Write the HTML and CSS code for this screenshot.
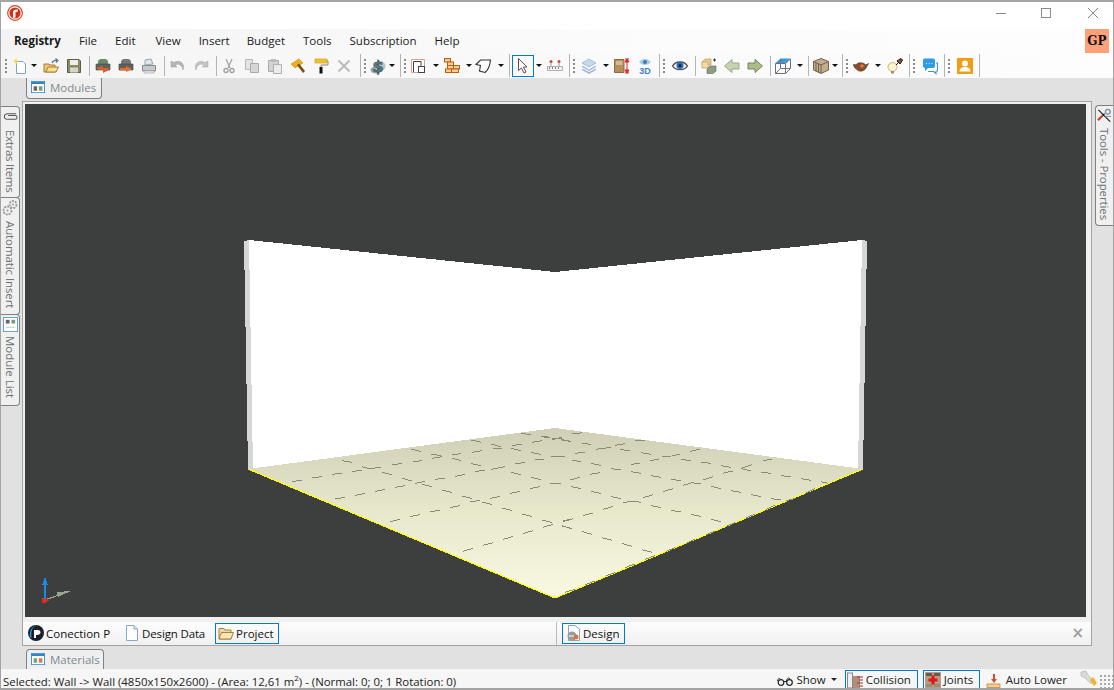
FILE: index.html
```html
<!DOCTYPE html>
<html lang="en">
<head>
<meta charset="utf-8">
<title>Design</title>
<link rel="stylesheet" href="styles.css">
</head>
<body>
<div class="window">
  <header class="title">
    <svg class="logo" viewBox="0 0 16 16"><circle cx="8" cy="8" r="7.300" fill="#fff" stroke="#d8432a" stroke-width="1.200"/><circle cx="8" cy="8" r="5.600" fill="#d62f14"/><path d="M6 13V7.500C6 5 8 4 11 4.500L10.500 7H8.500V12.500Z" fill="#fff"/></svg>
    <div class="controls">
      <svg class="ctl ctl-min" viewBox="0 0 12 12"><path d="M1 6.500H11" stroke="#8a8a8a"/></svg>
      <svg class="ctl ctl-max" viewBox="0 0 12 12"><rect x="1.500" y="1.500" width="9" height="9" fill="none" stroke="#8a8a8a"/></svg>
      <svg class="ctl ctl-close" viewBox="0 0 12 12"><path d="M1 1L11 11M11 1L1 11" stroke="#8a8a8a"/></svg>
    </div>
  </header>
  <nav class="menu">
    <span class="mi mi-bold">Registry</span><span class="mi">File</span><span class="mi mi-wide">Edit</span><span class="mi">View</span><span class="mi">Insert</span><span class="mi mi-tight">Budget</span><span class="mi">Tools</span><span class="mi">Subscription</span><span class="mi">Help</span>
    <span class="gp">GP</span>
  </nav>
  <div class="toolbar">
    <i class="grip"></i>
    <span class="b b21 ml1"><svg viewBox="0 0 16 16"><path d="M4.500 3.500H11L13.500 6V15.500H4.500Z" fill="#fff" stroke="#7da2ce"/><path d="M4 0L5 2.500L7.500 3L5 4L4 6.500L3 4L.5 3L3 2.500Z" fill="#f7d948"/></svg></span><span class="c c10"><u></u></span>
    <span class="b"><svg viewBox="0 0 16 16"><path d="M1 14V6H6L7 7H12V14Z" fill="#e9c77a" stroke="#a97c2c"/><path d="M3 14L5 9H15.500L13 14Z" fill="#f8dd93" stroke="#a97c2c"/><path d="M9 5C10 2.500 12 2 14 2.500M12.500 .5L15 2.500L13 4.500" fill="none" stroke="#5b6f86" stroke-width="1.200"/></svg></span>
    <span class="b"><svg viewBox="0 0 16 16"><path d="M1.500 1.500H13L14.500 3V14.500H1.500Z" fill="#8c8a66" stroke="#5f5d46"/><rect x="4" y="2" width="8" height="5" fill="#eee"/><rect x="4" y="9.500" width="8" height="5" fill="#d8d6c8"/></svg></span>
    <i class="sep"></i>
    <span class="b"><svg viewBox="0 0 16 16"><path d="M3 3L5 1H11L13 3V6H3Z" fill="#6a8a6a"/><path d="M1 6H15V12H1Z" fill="#5d6360" stroke="#454a48" stroke-width=".6"/><path d="M2 10H8V8L14 9.500V11L8 12.500V15L2 12Z" fill="#d4622a" transform="matrix(-1 0 0 1 16 0)"/></svg></span>
    <span class="b"><svg viewBox="0 0 16 16"><path d="M3 3L5 1H11L13 3V6H3Z" fill="#777"/><path d="M1 6H15V12H1Z" fill="#5d5f60" stroke="#454545" stroke-width=".6"/><path d="M2 10H8V8L14 11L8 14V12.500H2Z" fill="#e2702f"/></svg></span>
    <span class="b"><svg viewBox="0 0 16 16"><path d="M4 7V2L10 1L12 6Z" fill="#dfe7ee" stroke="#9aa6b2"/><path d="M1.500 7.500H14.500V13H1.500Z" fill="#c6c8c9" stroke="#8a8d8f"/><path d="M3 13H13V15H3Z" fill="#eee" stroke="#9a9a9a" stroke-width=".6"/></svg></span>
    <i class="sep"></i>
    <span class="b"><svg viewBox="0 0 16 16"><path d="M1 3V9H7L5 7C8 5 12 6.500 13 12C15.500 6 10 1 4 4.500Z" fill="#b5b5b5" stroke="#9c9c9c" stroke-width=".5"/></svg></span>
    <span class="b"><svg viewBox="0 0 16 16"><path d="M15 3V9H9L11 7C8 5 4 6.500 3 12C.5 6 6 1 12 4.500Z" fill="#c4c4c4" stroke="#a5a5a5" stroke-width=".5"/></svg></span>
    <i class="sep sep5"></i>
    <span class="b"><svg viewBox="0 0 16 16"><path d="M5 1L9 10M11 1L7 10" stroke="#a9a9a9" stroke-width="1.400"/><circle cx="5" cy="12.500" r="2" fill="none" stroke="#a0a0a0" stroke-width="1.300"/><circle cx="11" cy="12.500" r="2" fill="none" stroke="#a0a0a0" stroke-width="1.300"/></svg></span>
    <span class="b"><svg viewBox="0 0 16 16"><path d="M1.500 1.500H8.500V11.500H1.500Z" fill="#e4e4e4" stroke="#b8b8b8"/><path d="M6.500 5.500H14.500V14.500H6.500Z" fill="#d6d6d6" stroke="#aaa"/></svg></span>
    <span class="b"><svg viewBox="0 0 16 16"><path d="M1.500 2.500H11.500V13.500H1.500Z" fill="#d2d2d2" stroke="#aaa"/><rect x="4" y="1" width="5" height="3" fill="#bbb"/><path d="M6.500 6.500H14.500V15.500H6.500Z" fill="#ececec" stroke="#b0b0b0"/></svg></span>
    <span class="b"><svg viewBox="0 0 16 16"><path d="M1 6L9 1L13 5L5 10Z" fill="#f0b01c" stroke="#c88c10" stroke-width=".6"/><path d="M7 7L9 5.500L15 13L13 15Z" fill="#7f4c17"/></svg></span>
    <span class="b"><svg viewBox="0 0 16 16"><rect x="2" y="1" width="12" height="4" fill="#f2c22e" stroke="#c99a18" stroke-width=".6"/><path d="M14 3H15V7H8V9" fill="none" stroke="#888"/><rect x="6.500" y="9" width="3" height="6.500" fill="#111"/></svg></span>
    <span class="b"><svg viewBox="0 0 16 16"><path d="M2.500 2.500L13.500 13.500M13.500 2.500L2.500 13.500" stroke="#bcbcbc" stroke-width="2"/></svg></span>
    <i class="end"></i>
    <i class="grip"></i>
    <span class="b b21"><svg viewBox="0 0 16 16"><ellipse cx="6" cy="12" rx="5.500" ry="3.500" fill="#8fa5a8"/><ellipse cx="10" cy="8" rx="5.500" ry="5" fill="#b4c6c5"/><text x="8" y="13.500" class="dollar">$</text></svg></span><span class="c c8"><u></u></span>
    <i class="end"></i>
    <i class="grip"></i>
    <span class="b"><svg viewBox="0 0 16 16"><path d="M1.500 1.500H14.500V14.500H1.500Z" fill="#fff" stroke="#e0a088"/><path d="M3.500 14V3.500H11V8" fill="none" stroke="#444"/><rect x="8.500" y="8.500" width="6" height="6" fill="#fff" stroke="#444"/></svg></span><span class="c c11 p3"><u></u></span>
    <span class="b"><svg viewBox="0 0 16 16"><g fill="#f3ce9a" stroke="#bd5f0a"><rect x=".5" y=".5" width="6" height="3.500"/><rect x="3.500" y="4" width="6" height="3.500"/><rect x="9.500" y="7.500" width="6" height="3.500"/><rect x="3.500" y="7.500" width="6" height="3.500"/><rect x="1.500" y="11" width="6" height="3.500"/><rect x="7.500" y="11" width="7" height="3.500"/></g></svg></span><span class="c c8 p2"><u></u></span>
    <span class="b"><svg viewBox="0 0 16 16"><path d="M1 6.500L5.500 2H15.500C15 7 13 12 10 14.500L4.500 13L5.500 7.500Z" fill="#fff" stroke="#333" stroke-width="1.100"/></svg></span><span class="c c10 p3"><u></u></span>
    <i class="end"></i>
    <span class="b sel ml2"><svg viewBox="0 0 16 16"><path d="M3.500 .5L12 9H8.500L11 14L9 15L6.500 10L3.500 12.500Z" fill="#fff" stroke="#6d4a44"/></svg></span><span class="c c9 p2"><u></u></span>
    <span class="b b21 ml1"><svg viewBox="0 0 16 16"><circle cx="4" cy="3.500" r="1.500" fill="#c8493a"/><circle cx="12" cy="3.500" r="1.500" fill="#c8493a"/><path d="M4 5V8M12 5V8" stroke="#999"/><path d="M.5 8.500H15.500V12.500H.5Z" fill="#f1f1f1" stroke="#b0b0b0"/><path d="M2.500 9V11M5.500 9V11M8.500 9V11M11.500 9V11" stroke="#888"/></svg></span>
    <i class="end"></i>
    <i class="grip"></i>
    <span class="b ml2"><svg viewBox="0 0 16 16"><path d="M8 1L15 5L8 9L1 5Z" fill="#c3d9ee" stroke="#8fa1b4" stroke-width=".6"/><path d="M1.500 7.500L8 11.500L14.500 7.500L15 9L8 13L1 9Z" fill="#9dbde0"/><path d="M1.500 10.500L8 14L14.500 10.500L15 12L8 16L1 12Z" fill="#a8b6de"/></svg></span><span class="c c10 p2"><u></u></span>
    <span class="b"><svg viewBox="0 0 16 16"><path d="M.5 1.500H10V14.500H.5Z" fill="#b58d5e" stroke="#8c6a44"/><rect x="2" y="3" width="6.500" height="4" fill="#d4bb95"/><path d="M13 1V15M11 1H15M11 15H15M13 1L11 4H15ZM13 15L11 12H15Z" stroke="#e02424" fill="#e02424"/></svg></span>
    <span class="b b21"><svg viewBox="0 0 16 16"><path d="M2 4C5 0 11 0 14 4C11 8 5 8 2 4Z" fill="#a8cde8"/><circle cx="8" cy="4" r="2" fill="#3d7bb0"/><text x="8" y="15.500" class="t3d">3D</text></svg></span>
    <i class="end"></i>
    <i class="grip"></i>
    <span class="b ml3"><svg viewBox="0 0 16 16"><path d="M.5 8C4 2.500 12 2.500 15.500 8C12 13 4 13 .5 8Z" fill="#eef2f6" stroke="#3b4044" stroke-width="1.200"/><circle cx="8" cy="7.500" r="3.500" fill="#2f69b3"/><circle cx="8" cy="7.500" r="1.500" fill="#10233d"/></svg></span>
    <i class="sep"></i>
    <span class="b"><svg viewBox="0 0 16 16"><path d="M1 4L4 1H10V7H1Z" fill="#eccb92" stroke="#b58d4e" stroke-width=".6"/><path d="M1 4H7V10H1Z" fill="#f5dcae" stroke="#b58d4e" stroke-width=".6"/><path d="M6 11L9 8H15V13L12 15.500H6Z" fill="#8d9d84" stroke="#5c6a55" stroke-width=".6"/><path d="M12 2H15M13.500 .5V3.500" stroke="#333"/></svg></span>
    <span class="b"><svg viewBox="0 0 16 16"><path d="M.5 8L8 1.500V5H15V11H8V14.500Z" fill="#c5d2ae" stroke="#9aa88a"/></svg></span>
    <span class="b"><svg viewBox="0 0 16 16"><path d="M15.500 8L8 1.500V5H1V11H8V14.500Z" fill="#abbd8b" stroke="#74845c"/></svg></span>
    <i class="sep sep5"></i>
    <span class="b"><svg viewBox="0 0 16 16"><path d="M5.500 .5H15.500L10.500 5H.5Z" fill="#3a9ad9"/><path d="M.5 5.500H10.500V15.500H.5ZM10.500 5.500L15.500 1V10.500L10.500 15.500M.5 15.500L5.500 10.500H15.500M5.500 1V10.500" fill="none" stroke="#6e7078"/></svg></span><span class="c c10 p2"><u></u></span>
    <i class="sep sep5"></i>
    <span class="b b21"><svg viewBox="0 0 16 16"><path d="M8 .5L15.500 3.500V12L8 15.500L.5 12V3.500Z" fill="#c3ad8a" stroke="#6f6250"/><path d="M.5 3.500L8 7L15.500 3.500M8 7V15.500M3 5V13M5.500 6V14.500" fill="none" stroke="#6f6250"/></svg></span><span class="c c7 p1"><u></u></span>
    <i class="end"></i>
    <i class="grip"></i>
    <span class="b ml1"><svg viewBox="0 0 16 16"><path d="M3 7C4 4 11 4 12.500 7L15.500 5.500L13 10C11 14 5 14 3.500 11C1.500 10.500 .5 8 .5 6.500C1.500 6.500 2.500 6.500 3 7Z" fill="#8a4d2d" stroke="#4b3325" stroke-width=".6"/><circle cx="9" cy="8" r="1.800" fill="#dd7a34"/></svg></span><span class="c c11 p2"><u></u></span>
    <span class="b b21"><svg viewBox="0 0 16 16"><circle cx="5.500" cy="9" r="4.500" fill="#fff4cf" stroke="#cbb36b"/><rect x="4" y="13" width="3" height="2.500" fill="#99917c"/><path d="M9 7L11 5M10 3L14 .5L15.500 2L13 6Z" stroke="#111" fill="#9f541d"/></svg></span>
    <i class="end"></i>
    <i class="grip"></i>
    <span class="b b21 ml3"><svg viewBox="0 0 16 16"><path d="M1 2.500C1 1 2 .5 3 .5H11C12.500 .5 13 1.500 13 2.500V8C13 9 12 10 11 10H6L3 13V10C2 10 1 9 1 8Z" fill="#2f9be4"/><path d="M14 5H15.500V12C15.500 13 15 13.500 14 13.500V15.500L11.500 13.500H6" fill="none" stroke="#4a90c0" stroke-width="1.100"/><path d="M4 5.500H4.800M6.800 5.500H7.600M9.600 5.500H10.400" stroke="#fff" stroke-width="1.200"/></svg></span>
    <i class="end"></i>
    <i class="grip"></i>
    <span class="b b21 ml3"><svg viewBox="0 0 16 16"><rect width="16" height="16" fill="#f19c12"/><circle cx="8" cy="5.500" r="3" fill="#fff"/><path d="M2.500 13.500C2.500 10 5.500 9 8 9C10.500 9 13.500 10 13.500 13.500Z" fill="#fff"/></svg></span>
    <i class="end"></i>
  </div>
  <div class="band band-top">
    <div class="hang-tab"><svg class="tab-ico" viewBox="0 0 16 16" preserveAspectRatio="none"><rect x=".5" y=".5" width="15" height="15" fill="#fff" stroke="#2e86c8"/><rect x="1" y="1" width="14" height="3" fill="#2e86c8"/><rect x="3" y="7" width="4" height="6" fill="#666"/><rect x="9" y="7" width="4" height="6" fill="#7a9a7a"/></svg><span>Modules</span></div>
  </div>
  <main class="main">
    <aside class="side-left">
      <div class="vtab vtab-a"><svg viewBox="0 0 16 16"><path d="M14 5H5C3 5 1.500 6 1.500 8S3 11 5 11H13C14.500 11 15 10 15 9S14.500 7 13 7H5.500" fill="none" stroke="#555" stroke-width="1.100"/></svg><span>Extras Items</span></div>
      <div class="vtab vtab-b"><svg viewBox="0 0 16 16"><g fill="none" stroke="#9a9a9a" stroke-width="1.800" stroke-dasharray="2 1"><circle cx="5.500" cy="10.500" r="4"/><circle cx="11" cy="4.500" r="3.500"/></g><circle cx="5.500" cy="10.500" r="1" fill="#9a9a9a"/><circle cx="11" cy="4.500" r="1" fill="#9a9a9a"/></svg><span>Automatic Insert</span></div>
      <div class="vtab vtab-c"><svg viewBox="0 0 16 16"><rect x=".5" y=".5" width="15" height="15" fill="#fff" stroke="#5aa0d4"/><rect x="3" y="3" width="4" height="4" fill="#666"/><rect x="9" y="3" width="4" height="4" fill="#7a9a7a"/><path d="M3 11H13" stroke="#c8c8c8"/></svg><span>Module List</span></div>
    </aside>
    <section class="frame">
      <svg class="scene" viewBox="25 104 1061 513">
        <defs><linearGradient id="floorfill" x1="0" y1="0" x2="0" y2="1"><stop offset="0" stop-color="#cfcfb7"/><stop offset=".5" stop-color="#e8e8cd"/><stop offset="1" stop-color="#f9f9e3"/></linearGradient></defs>
        <path d="M244 241L249 240L253 470L248 469Z" fill="#d6d6d6"/>
        <path d="M862 240L867 241L863 469L858 470Z" fill="#d6d6d6"/>
        <path d="M249 240L555 272L862 240L858 470L555 428L253 470Z" fill="#fff"/>
        <path d="M248 469L555 428L863 469L555 598Z" fill="url(#floorfill)"/>
        <path d="M248 469L555 598L863 469" fill="none" stroke="#ff0" stroke-width="1.200"/>
        <g transform="translate(230 420) scale(.33333)" class="dashes">
          <path d="M186 185L215 180M247 174L276 170M306 163L336 160M367 155L396 150M396 140L420 147M418 146L453 142M336 122L366 127M457 157L486 164M487 135L516 130M549 125L576 122M543 87L573 95M604 102L632 107M606 115L636 110M665 105L692 101M665 114L693 122M727 97L756 92M724 60L753 67M783 72L812 80M789 85L816 84M845 77L875 72M843 85L872 92M907 67L936 62M873 40L902 44M934 48L960 52M967 57L995 53M994 60L1018 62M903 97L932 103M915 120L942 117M963 110L1005 108M723 131L753 137M784 148L825 140M855 132L884 127M843 157L872 164M904 172L933 179M735 155L765 150M676 169L705 163M615 178L645 175M556 190L585 184M575 192L605 200M516 175L546 183M495 202L525 197M436 214L465 208M376 226L405 220M315 237L345 232M636 210L666 218M697 228L726 236M720 246L750 241M756 246L786 254M781 235L810 229M840 220L870 214M900 206L930 200M962 190L992 190M816 264L846 272M877 282L906 290M937 300L966 308M940 322L968 313M997 317L1020 325M1000 303L1020 298M660 263L690 257M600 276L630 270M540 290L570 284M480 305L510 298M699 394L729 385M759 376L789 368M820 358L849 349M880 340L909 332"/>
        </g>
        <g transform="translate(540 420) scale(.33333)" class="dashes">
          <path d="M2 50L30 53M37 58L65 55M65 58L92 65M97 42L127 38M127 70L154 73M167 88L212 82M225 76L255 71M241 88L270 93M285 62L315 61M303 98L333 103M330 122L358 117M365 109L393 111M395 107L420 103M423 118L453 122M450 95L480 87M483 127L513 130M543 137L573 142M603 145L637 134M605 146L632 153M549 160L578 153M663 157L693 160M670 122L695 118M723 167L753 170M783 176L813 181M843 185L865 190M693 236L723 240M633 224L663 230M573 212L603 217M513 199L543 206M489 180L518 170M430 196L456 188L483 192M393 178L423 182M333 167L363 172M369 215L398 206M310 233L339 224M249 249L276 243L303 247M213 230L243 236M153 214L183 220M93 200L123 206M90 180L120 172M30 190L62 190M150 163L180 158M153 130L183 136M96 121L123 125M213 146L243 150M273 133L300 130M273 155L302 160M32 110L75 108M106 100L135 96M0 118L12 118M189 268L218 260M129 287L158 279M69 305L99 296M6 300L36 308M10 322L38 313M67 318L96 326M127 335L156 343M186 353L216 361M247 371L276 379M306 389L336 397M333 257L363 263M393 271L423 276M453 283L483 289M513 298L543 305M75 517L105 508M135 495L165 483M197 468L225 458M255 443L285 432M316 418L345 407M378 394L405 383M438 370L465 358M497 345L525 333M558 320L585 307M617 294L645 282M678 268L705 256M738 243L765 235M795 220L825 206"/>
        </g>
        <path d="M45 600L70 591" stroke="#9aa58f" stroke-width="1.200"/>
        <path d="M57 592L70 591L58 597Z" fill="#9aa58f"/>
        <path d="M45 600V584" stroke="#1e88e5" stroke-width="1.500"/>
        <path d="M42 585L45 577L48 585Z" fill="#1e88e5"/>
        <path d="M42 598L50 600L45 603H42Z" fill="#e02b1d"/>
      </svg>
      <div class="tabbar">
        <div class="pane pane-left">
          <div class="pt"><svg viewBox="0 0 16 16"><circle cx="8" cy="8" r="8" fill="#1b1f2c"/><path d="M2 12C1 6 4 1 9 0C3 2 3 8 3.500 13Z" fill="#2e9be6"/><path d="M6 13V5H10C12 5 12.500 6.500 12.500 7.500C12.500 9 11 10 9 10H8V13Z" fill="#fff"/></svg><span>Conection P</span></div>
          <div class="pt pt-data"><svg viewBox="0 0 16 16"><path d="M2.500 .5H10L13.500 4V15.500H2.500Z" fill="#fff" stroke="#86a7cf"/><path d="M10 .5V4H13.500" fill="#dbe7f4" stroke="#86a7cf"/></svg><span>Design Data</span></div>
          <div class="pt pt-on pt-proj"><svg viewBox="0 0 16 16"><path d="M1 14V3.500H6L7 5H13V14Z" fill="#efd8a8" stroke="#a7803a"/><path d="M1 14L3.500 7.500H15.500L13 14Z" fill="#f8e5bc" stroke="#a7803a"/></svg><span>Project</span></div>
        </div>
        <div class="pane pane-right">
          <div class="pt pt-on"><svg viewBox="0 0 16 16"><path d="M3.500 .5H10L14.500 4V15.500H3.500Z" fill="#fff" stroke="#86a7cf"/><circle cx="7" cy="11" r="4.500" fill="#9a9a9a"/><circle cx="11" cy="12" r="2.500" fill="#d8743a"/><path d="M4 11H9" stroke="#fff"/></svg><span>Design</span></div>
          <span class="pane-x">×</span>
        </div>
      </div>
    </section>
    <aside class="side-right">
      <div class="vtab-r"><svg viewBox="0 0 16 16"><path d="M1.500 2L14 14.500" stroke="#222" stroke-width="1.300"/><path d="M1 13L6 8" stroke="#c9421d" stroke-width="2.400"/><path d="M6 8L8 6" stroke="#111" stroke-width="1.500"/><circle cx="11.500" cy="4" r="2.500" fill="none" stroke="#7d93a8" stroke-width="1.500"/><path d="M9 9L15 9" stroke="#8d9dac" stroke-width="1.400"/></svg><span>Tools - Properties</span></div>
    </aside>
  </main>
  <div class="band band-bottom">
    <div class="up-tab"><svg class="tab-ico" viewBox="0 0 16 16" preserveAspectRatio="none"><rect x=".5" y=".5" width="15" height="15" fill="#fff" stroke="#2e86c8"/><rect x="1" y="1" width="14" height="3" fill="#2e86c8"/><rect x="3" y="7" width="4" height="6" fill="#7a9a8a"/><rect x="9" y="7" width="4" height="6" fill="#d67a5a"/></svg><span>Materials</span></div>
  </div>
  <footer class="status">
    <span class="status-text">Selected: Wall -&gt; Wall (4850x150x2600) - (Area: 12,61 m<sup>2</sup>) - (Normal: 0; 0; 1 Rotation: 0)</span>
    <div class="status-right">
      <span class="si si-show"><svg viewBox="0 0 16 16"><path d="M.5 9C1 6 3 6 3.500 7.500M9.500 9C10 6 12 5 13 7" fill="none" stroke="#222"/><circle cx="4" cy="10.500" r="2.800" fill="none" stroke="#222" stroke-width="1.200"/><circle cx="12.500" cy="10.500" r="2.800" fill="none" stroke="#222" stroke-width="1.200"/><path d="M6.500 9.500L10 9.500" stroke="#222"/></svg>Show<u class="scaret"></u></span>
      <span class="si si-on si-coll"><svg viewBox="0 0 16 16"><rect x=".5" y="1" width="5" height="15" fill="#eee" stroke="#888"/><rect x="6" y="4" width="7" height="12" fill="#b58d7a"/><path d="M10 5H16M12 8H16M10 11H16M12 14H16" stroke="#8f3a2a"/></svg>Collision</span>
      <span class="si si-on si-joint"><svg viewBox="0 0 16 16"><rect width="16" height="16" fill="#b89c86"/><rect x="1" y="1" width="6" height="3" fill="#6c5a49"/><rect x="9" y="1" width="6" height="3" fill="#6c5a49"/><rect x="1" y="12" width="6" height="3" fill="#8e9478"/><rect x="9" y="12" width="6" height="3" fill="#8e9478"/><path d="M8 3.500V12.500M3.500 8H12.500" stroke="#e01616" stroke-width="3"/></svg>Joints</span>
      <span class="si si-auto"><svg viewBox="0 0 16 16"><path d="M7 2H9V7H11L8 11L5 7H7Z" fill="#d9482a"/><rect x="1" y="12" width="13" height="3.500" fill="#f2cf8e" stroke="#b17a2a" stroke-width=".7"/></svg>Auto Lower</span>
      <svg class="wrench" viewBox="0 0 18 18"><path d="M1 2L6 1L8 5L14 11L11 14L5 8L1 6Z" fill="#d8d8d8" stroke="#a8a8a8" stroke-width=".5"/><path d="M10 10L13 7L17 13L14 16Z" fill="#f0b428"/></svg>
      <i class="size-grip"></i>
    </div>
  </footer>
</div>
</body>
</html>
```
FILE: styles.css
```css
* { box-sizing: border-box; }
html, body { margin: 0; padding: 0; }
body { background: #e1e1e1; font-family: "Open Sans", "Liberation Sans", sans-serif; font-size: 11.5px; color: #1a1a1a; }
i, u { display: block; text-decoration: none; font-style: normal; }
svg { display: block; flex: none; width: 16px; height: 16px; overflow: visible; }

.window { width: 1114px; height: 690px; display: flex; flex-direction: column; overflow: hidden; background: #e1e1e1; border-style: solid; border-color: #a3a3a3; border-width: 2px 1px; }

.title { height: 27px; flex: none; background: #fff; display: flex; align-items: center; padding: 0 0 6px 6px; }
.logo { width: 16px; height: 16px; }
.controls { margin-left: auto; display: flex; }
.ctl { width: 12px; height: 12px; }
.ctl-min { margin-right: 33px; }
.ctl-max { margin-right: 35px; }
.ctl-close { margin-right: 14px; }

.menu { height: 24px; flex: none; display: flex; align-items: center; padding-left: 4px; background: linear-gradient(90deg, #f3f3f3, #fcfcfc 60%, #fdfdfd); font-size: 11.5px; position: relative; }
.mi { padding: 0 9px; line-height: 24px; }
.mi-bold { font-weight: 700; }
.mi-wide { padding-right: 11px; }
.mi-tight { padding-left: 8px; }
.gp { margin-left: auto; margin-right: 4px; width: 24px; height: 24px; background: #ffa07a; display: flex; align-items: center; justify-content: center; font-family: "DejaVu Serif", serif; font-weight: 700; font-size: 12px; color: #111; }

.toolbar { height: 25px; flex: none; display: flex; align-items: center; padding-left: 1px; background: linear-gradient(90deg, #f5f5f5, #fafafa 60%, #fdfdfd); }
.b { width: 23px; height: 22px; flex: none; padding: 3px 4px 3px 3px; }
.b21 { width: 21px; padding-right: 2px; }
.ml1 { margin-left: 1px; }
.ml2 { margin-left: 2px; }
.ml3 { margin-left: 3px; }
.sel { width: 22px; padding: 2px; border: 1px solid #0078d7; }
.c { flex: none; height: 22px; display: flex; align-items: center; padding-left: 1px; }
.c u { border-left: 3px solid transparent; border-right: 3px solid transparent; border-top: 3px solid #111; }
.c7 { width: 7px; } .c8 { width: 8px; } .c9 { width: 9px; } .c10 { width: 10px; } .c11 { width: 11px; }
.p1 { padding-left: 1px; } .p2 { padding-left: 2px; } .p3 { padding-left: 3px; }
.grip { width: 6px; height: 16px; flex: none; background: radial-gradient(circle at 1px 1px, #8a8a8a 1px, transparent 1.1px) 3px 1px / 2px 4px repeat-y; }
.sep { width: 6px; height: 20px; flex: none; background: linear-gradient(#b4b4b4, #b4b4b4) 3px 0 / 1px 100% no-repeat; }
.sep5 { width: 5px; }
.end { width: 5px; height: 23px; flex: none; background: linear-gradient(#b4b4b4, #b4b4b4) 4px 0 / 1px 100% no-repeat; }
.dollar { font: 700 16px "DejaVu Sans", sans-serif; fill: #5f7f88; stroke: #2f4a50; stroke-width: .6px; text-anchor: middle; }
.t3d { font: 700 9px "Liberation Sans", sans-serif; fill: #3f7fc0; text-anchor: middle; }

.band { height: 23px; flex: none; display: flex; }
.hang-tab, .up-tab { display: flex; align-items: center; gap: 5px; color: #7f8a8e; background: #efefef; border: 1px solid #808080; }
.tab-ico { width: 14px; height: 12px; }
.hang-tab { margin-left: 25px; width: 76px; height: 21px; padding: 0 0 2px 4px; border-top: 0; border-radius: 0 0 4px 4px; }
.band-bottom { padding-top: 3px; }
.up-tab { margin-left: 25px; width: 78px; height: 20px; padding: 0 0 1px 4px; border-bottom: 0; border-radius: 4px 4px 0 0; }

.main { height: 545px; flex: none; display: flex; }
.side-left { width: 21px; flex: none; padding-top: 5px; }
.vtab, .vtab-r { display: flex; flex-direction: column; align-items: center; background: #f0f0f0; border: 1px solid #808080; color: #6b7072; }
.vtab { width: 19px; margin-top: -1px; border-left: 0; border-radius: 0 4px 4px 0; padding-top: 2px; }
.vtab span, .vtab-r span { writing-mode: vertical-rl; line-height: 17px; white-space: nowrap; }
.vtab svg, .vtab-r svg { width: 15px; height: 15px; }
.vtab-a { height: 92px; margin-top: 0; }
.vtab-a span { margin-top: 6px; letter-spacing: -.3px; }
.vtab-b { height: 118px; }
.vtab-b svg { width: 16px; height: 16px; }
.vtab-b span { margin-top: 5px; letter-spacing: -.1px; }
.vtab-c { height: 92px; }
.vtab-c span { margin-top: 4px; }

.frame { width: 1070px; height: 545px; flex: none; border: 1px solid #a3a3a3; background: #f0f0f0; display: flex; flex-direction: column; }
.scene { display: block; width: 1061px; height: 513px; margin: 2px 5px 0 2px; background: #3d3f3e; flex: none; shape-rendering: crispEdges; overflow: hidden; }
.dashes path { fill: none; stroke: #8b8b72; stroke-width: 3; }
.tabbar { height: 28px; flex: none; display: flex; padding-top: 5px; background: linear-gradient(#f0f0f0 5px, #fdfdfd 5px, #f0f0f0); }
.pane { height: 23px; display: flex; align-items: flex-start; }
.pane-left { width: 534px; padding-left: 2px; gap: 5px; border-right: 1px solid #bdbdbd; }
.pane-right { flex: 1; padding-left: 5px; }
.pt { display: flex; align-items: center; gap: 2px; height: 21px; margin-top: 1px; padding: 0 5px 1px 2px; border: 1px solid transparent; color: #111; white-space: nowrap; }
.pt-data { width: 89px; letter-spacing: -.15px; }
.pt-proj { width: 64px; }
.pt-on { border-color: #0078d7; }
.pane-x { margin-left: auto; margin-right: 7px; font: 700 15px/22px "DejaVu Sans", sans-serif; color: #a0a0a0; }

.side-right { width: 21px; flex: none; padding: 4px 0 0 3px; }
.vtab-r { width: 18px; height: 121px; border-right: 0; border-radius: 4px 0 0 4px; padding-top: 2px; }
.vtab-r span { margin-top: 5px; letter-spacing: -.1px; }

.status { height: 19px; flex: none; display: flex; align-items: center; padding-left: 2px; background: #f6f6f6; white-space: nowrap; color: #222; }
.status-text { font-size: 11.4px; padding-top: 6px; }
.status sup { font-size: 8px; line-height: 0; }
.status-right { margin-left: auto; display: flex; align-items: center; height: 19px; }
.si { display: flex; align-items: center; gap: 3px; height: 19px; margin-top: 1px; border: 1px solid transparent; border-bottom: 0; }
.si-show { margin-right: 7px; }
.si-on { border-color: #0078d7; padding: 0 5px 0 1px; }
.si-coll { width: 73px; margin-right: 5px; }
.si-joint { width: 57px; margin-right: 5px; }
.si-auto { margin-right: 12px; gap: 4px; }
.scaret { border-left: 3px solid transparent; border-right: 3px solid transparent; border-top: 3px solid #222; margin-left: 2px; }
.wrench { width: 18px; height: 18px; }
.size-grip { width: 15px; height: 13px; margin-top: 5px; background: radial-gradient(circle at 1px 1px, #a8a8a8 1px, transparent 1.1px) 2px 0 / 4px 4px; }
```
